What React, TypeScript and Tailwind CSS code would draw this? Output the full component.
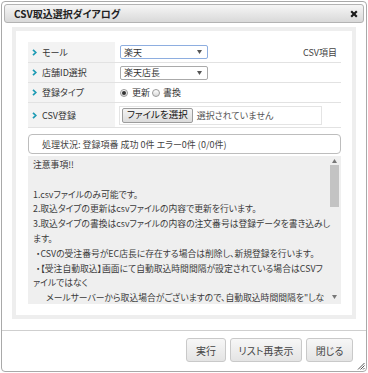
import React from "react";

const FONT = "font-['Noto_Sans_CJK_JP',sans-serif] [font-feature-settings:'palt']";

function Chevron() {
  return (
    <svg width="5" height="7" viewBox="0 0 5 7" className="shrink-0">
      <path d="M1 0.8 L3.8 3.5 L1 6.2" fill="none" stroke="#1d9bb4" strokeWidth="1.7" />
    </svg>
  );
}

function Arrow() {
  return (
    <svg width="5" height="4" viewBox="0 0 5 4">
      <path d="M0 0 L5 0 L2.5 4 Z" fill="#555" />
    </svg>
  );
}

function Select({ value, focused }: { value: string; focused?: boolean }) {
  return (
    <div
      className={
        "w-[88px] h-[14px] bg-white rounded-[2px] border flex items-center justify-between pl-[3px] pr-[5px] " +
        (focused ? "border-[#8eaee0]" : "border-[#aaaaaa]")
      }
    >
      <span className="text-[9px] leading-none text-[#333]">{value}</span>
      <Arrow />
    </div>
  );
}

function Radio({ checked }: { checked?: boolean }) {
  return (
    <div className="w-[8px] h-[8px] rounded-full border border-[#9a9a9a] bg-gradient-to-b from-[#ffffff] to-[#d8d8d8] flex items-center justify-center">
      {checked && <div className="w-[4px] h-[4px] rounded-full bg-[#333]" />}
    </div>
  );
}

function Row({
  label,
  h,
  children,
}: {
  label: string;
  h: string;
  children: React.ReactNode;
}) {
  return (
    <div className={"flex border-b border-[#e2e2e2] " + h}>
      <div className="w-[87px] shrink-0 bg-[#f3f3f3] flex items-center pl-[4px] gap-[5px]">
        <Chevron />
        <span className="text-[9px] leading-none text-[#333]">{label}</span>
      </div>
      <div className="flex-1 flex items-center pl-[5px] pr-[4px]">{children}</div>
    </div>
  );
}

function Btn({ label, w }: { label: string; w: string }) {
  return (
    <div
      className={
        "h-[24px] rounded-[3px] border border-[#c9c9c9] bg-gradient-to-b from-[#f7f7f7] to-[#e4e4e4] flex items-center justify-center text-[10px] text-[#444] " +
        w
      }
    >
      {label}
    </div>
  );
}

export default function App() {
  return (
    <div className={"w-[368px] h-[373px] bg-white p-[1px] " + FONT}>
      <div className="relative h-[371px] border border-[#a9a9a9] rounded-[4px] flex flex-col px-[2px] pt-[2px]">
        {/* Title bar */}
        <div className="h-[19px] shrink-0 rounded-[3px] border border-[#b3b3b3] bg-gradient-to-b from-[#f6f6f6] to-[#d9d9d9] flex items-center justify-between pl-[9px] pr-[5px]">
          <span className="text-[10px] font-bold text-[#222] leading-none">CSV取込選択ダイアログ</span>
          <svg width="8" height="8" viewBox="0 0 8 8">
            <path d="M1.2 1.2 L6.8 6.8 M6.8 1.2 L1.2 6.8" stroke="#1a1a1a" strokeWidth="2.1" />
          </svg>
        </div>

        {/* Frame */}
        <div className="mt-[4px] mx-[8px] h-[292px] border-4 border-[#eeeeee] bg-white pl-[12px] pr-[11px] pt-[11px]">
          {/* table */}
          <div className="flex flex-col">
            <Row label="モール" h="h-[21px]">
              <Select value="楽天" focused />
              <span className="ml-auto text-[9px] leading-none text-[#444]">CSV項目</span>
            </Row>
            <Row label="店舗ID選択" h="h-[20px]">
              <Select value="楽天店長" />
            </Row>
            <Row label="登録タイプ" h="h-[20px]">
              <div className="flex items-center">
                <Radio checked />
                <span className="ml-[4px] text-[9px] leading-none text-[#333]">更新</span>
                <div className="ml-[2px]">
                  <Radio />
                </div>
                <span className="ml-[3px] text-[9px] leading-none text-[#333]">書換</span>
              </div>
            </Row>
            <Row label="CSV登録" h="h-[25px]">
              <div className="w-[203px] h-[19px] -ml-[1px] border border-[#e4e4e4] flex items-center pl-[2px]">
                <div className="h-[15px] px-[4px] rounded-[2px] border border-[#9c9c9c] bg-gradient-to-b from-[#f4f4f4] to-[#dcdcdc] flex items-center text-[9.5px] leading-none text-[#111]">
                  ファイルを選択
                </div>
                <span className="ml-[4px] text-[9px] leading-none text-[#555]">選択されていません</span>
              </div>
            </Row>
          </div>

          {/* status */}
          <div className="mt-[6px] h-[20px] rounded-[4px] border border-[#bdbdbd] flex items-center pl-[13px]">
            <span className="text-[9px] leading-none text-[#444] whitespace-nowrap">
              処理状況: 登録項番 成功 0件 エラー0件 (0/0件)
            </span>
          </div>

          {/* notes */}
          <div className="relative mt-[2px] h-[148px] bg-[#efefef] overflow-hidden">
            <div className="pl-[5px] pt-[2px] text-[8.8px] leading-[14.8px] text-[#3a3a3a] whitespace-nowrap">
              <div>注意事項!!</div>
              <div>&nbsp;</div>
              <div>1.csvファイルのみ可能です。</div>
              <div>2.取込タイプの更新はcsvファイルの内容で更新を行います。</div>
              <div>3.取込タイプの書換はcsvファイルの内容の注文番号は登録データを書き込みし</div>
              <div>ます。</div>
              <div className="pl-[3px]">・CSVの受注番号がEC店長に存在する場合は削除し、新規登録を行います。</div>
              <div className="pl-[3px]">・【受注自動取込】画面にて自動取込時間間隔が設定されている場合はCSVフ</div>
              <div>ァイルではなく</div>
              <div className="pl-[13px]">メールサーバーから取込場合がございますので、自動取込時間間隔を"しな</div>
            </div>
            {/* scrollbar */}
            <div className="absolute right-[2px] top-0 bottom-0 w-[10px] flex flex-col items-center">
              <svg width="5" height="4" viewBox="0 0 5 4" className="mt-[3px]">
                <path d="M0 4 L5 4 L2.5 0 Z" fill="#777" />
              </svg>
              <div className="mt-[2px] w-[9px] h-[42px] bg-[#c3c3c3]" />
              <div className="flex-1" />
              <svg width="5" height="4" viewBox="0 0 5 4" className="mb-[5px]">
                <path d="M0 0 L5 0 L2.5 4 Z" fill="#777" />
              </svg>
            </div>
          </div>
        </div>

        {/* separator */}
        <div className="mt-[11px] h-px bg-[#cfcfcf] -mx-[2px]" />

        {/* buttons */}
        <div className="mt-[7px] flex justify-end gap-[4px] pr-[11px]">
          <Btn label="実行" w="w-[40px]" />
          <Btn label="リスト再表示" w="w-[72px]" />
          <Btn label="閉じる" w="w-[47px]" />
        </div>

        {/* resize grip */}
        <svg width="8" height="8" viewBox="0 0 8 8" className="absolute right-[1px] bottom-[1px]">
          <path d="M7.5 1 L1 7.5 M7.5 3.5 L3.5 7.5 M7.5 6 L6 7.5" stroke="#555" strokeWidth="1" />
        </svg>
      </div>
    </div>
  );
}
